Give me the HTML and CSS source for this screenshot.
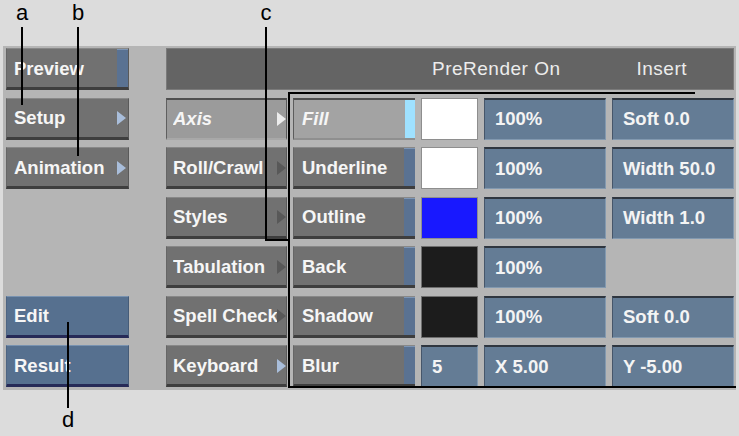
FILE: index.html
```html
<!DOCTYPE html>
<html lang="en">
<head>
    <meta charset="UTF-8">
    <meta name="viewport" content="width=device-width, initial-scale=1.0">
    <title>Text Setup Menu</title>
    <link rel="stylesheet" href="styles.css">
</head>
<body>
    <div class="figure">
        <div class="panel">
            <!-- row 1 -->
            <div class="btn left-btn"><span class="label">Preview</span><span class="ind"></span></div>
            <div class="header">
                <span>PreRender On</span>
                <span>Insert</span>
            </div>

            <!-- row 2 -->
            <div class="btn left-btn"><span class="label">Setup</span><span class="arrow"></span></div>
            <div class="btn mid-btn selected"><span class="label">Axis</span><span class="arrow light"></span></div>
            <div class="btn tbl-btn active"><span class="label">Fill</span><span class="ind cyan"></span></div>
            <div class="swatch white"></div>
            <div class="field">100%</div>
            <div class="field">Soft 0.0</div>

            <!-- row 3 -->
            <div class="btn left-btn"><span class="label">Animation</span><span class="arrow"></span></div>
            <div class="btn mid-btn"><span class="label">Roll/Crawl</span><span class="arrow dark"></span></div>
            <div class="btn tbl-btn"><span class="label">Underline</span><span class="ind"></span></div>
            <div class="swatch white"></div>
            <div class="field">100%</div>
            <div class="field">Width 50.0</div>

            <!-- row 4 -->
            <div class="empty"></div>
            <div class="btn mid-btn"><span class="label">Styles</span><span class="arrow dark"></span></div>
            <div class="btn tbl-btn"><span class="label">Outline</span><span class="ind"></span></div>
            <div class="swatch blue"></div>
            <div class="field">100%</div>
            <div class="field">Width 1.0</div>

            <!-- row 5 -->
            <div class="empty"></div>
            <div class="btn mid-btn"><span class="label">Tabulation</span><span class="arrow dark"></span></div>
            <div class="btn tbl-btn"><span class="label">Back</span><span class="ind"></span></div>
            <div class="swatch black"></div>
            <div class="field">100%</div>
            <div class="empty"></div>

            <!-- row 6 -->
            <div class="btn left-btn blue-btn"><span class="label">Edit</span></div>
            <div class="btn mid-btn"><span class="label">Spell Check</span><span class="arrow dark"></span></div>
            <div class="btn tbl-btn"><span class="label">Shadow</span><span class="ind"></span></div>
            <div class="swatch black"></div>
            <div class="field">100%</div>
            <div class="field">Soft 0.0</div>

            <!-- row 7 -->
            <div class="btn left-btn blue-btn"><span class="label">Result</span></div>
            <div class="btn mid-btn"><span class="label">Keyboard</span><span class="arrow"></span></div>
            <div class="btn tbl-btn"><span class="label">Blur</span><span class="ind"></span></div>
            <div class="field">5</div>
            <div class="field">X 5.00</div>
            <div class="field">Y -5.00</div>
        </div>

        <!-- callouts -->
        <span class="callout-letter letter-a">a</span>
        <span class="callout-letter letter-b">b</span>
        <span class="callout-letter letter-c">c</span>
        <span class="callout-letter letter-d">d</span>
        <div class="line line-a"></div>
        <div class="line line-b"></div>
        <div class="line line-c"></div>
        <div class="line line-c-foot"></div>
        <div class="line bracket-side"></div>
        <div class="line bracket-top"></div>
        <div class="line bracket-bottom"></div>
        <div class="line line-d"></div>
    </div>
</body>
</html>
```

FILE: styles.css
```css
body {
    margin: 0;
    padding: 0;
    background-color: #dcdcdc;
    font-family: "Liberation Sans", Arial, sans-serif;
}
.figure {
    position: relative;
    width: 739px;
    height: 436px;
    padding: 46px 0 0 3px;
    box-sizing: border-box;
}
.panel {
    width: 733px;
    box-sizing: border-box;
    background-color: #b5b5b5;
    padding: 2px 2px 3px 3px;
    display: grid;
    grid-template-columns: 154px 121px 122px 57px 122px 122px;
    grid-template-rows: 42px repeat(6, 42px);
    column-gap: 6px;
    row-gap: 7.5px;
}
.header {
    grid-column: 2 / 7;
    background-color: #646464;
    border: 1px solid #7a7a7a;
    color: #ececec;
    font-size: 19px;
    letter-spacing: 0.5px;
    display: flex;
    align-items: center;
    padding-left: 265px;
    gap: 76px;
}

/* buttons */
.btn {
    display: flex;
    align-items: center;
    box-sizing: border-box;
    background-color: #717171;
    border-top: 1px solid #888;
    border-left: 1px solid #666;
    border-right: 1px solid #5a5a5a;
    border-bottom: 3px solid #3e3e3e;
    color: #f6f6f6;
    font-size: 18.5px;
    font-weight: bold;
    padding-left: 7px;
    padding-top: 1px;
    overflow: hidden;
}
.btn .label {
    flex: 1;
    min-width: 0;
    overflow: hidden;
    white-space: nowrap;
}
.left-btn {
    width: 123px;
}
.mid-btn {
    padding-left: 6px;
}
.mid-btn .arrow {
    margin-right: 0;
}
.btn .ind {
    width: 11px;
    align-self: stretch;
    background-color: #5a7292;
    border-top: 1px solid #7d95b4;
    margin-top: -1px;
    margin-bottom: -3px;
    border-bottom: 3px solid #2b2f5c;
}
.btn .ind.cyan {
    background-color: #9fe1ff;
    border-top: none;
    border-bottom: 2px solid #9fe1ff;
    margin-bottom: -2px;
    width: 10px;
}
.arrow {
    width: 0;
    height: 0;
    border-top: 7px solid transparent;
    border-bottom: 7px solid transparent;
    border-left: 9px solid #a9bedb;
    margin-right: 2px;
}
.arrow.dark {
    border-left-color: #585858;
}
.arrow.light {
    border-left-color: #ececec;
}
.selected {
    background-color: #9b9b9b;
    border-top: 2px solid #4f4f4f;
    border-left: 1px solid #5f5f5f;
    border-bottom: 2px solid #a8a8a8;
    font-style: italic;
}
.tbl-btn {
    padding-left: 8px;
    border-right: none;
}
.active {
    background-color: #a3a3a3;
    border-top: 2px solid #4e4e4e;
    border-left: 1px solid #5c5c5c;
    border-bottom: 2px solid #8f8f8f;
    font-style: italic;
}
.blue-btn {
    background-color: #56708f;
    border-top: 1px solid #7892b0;
    border-left-color: #4d6482;
    border-right-color: #465c78;
    border-bottom: 3px solid #262a57;
}

/* value fields and swatches */
.field {
    display: flex;
    align-items: center;
    box-sizing: border-box;
    background-color: #647c95;
    border-top: 2px solid #2f363f;
    border-left: 1px solid #46566a;
    border-right: 1px solid #8299b0;
    border-bottom: 1px solid #8299b0;
    color: #f4f4f4;
    font-size: 18.5px;
    font-weight: bold;
    padding-left: 10px;
}
.swatch {
    box-sizing: border-box;
    border: 1px solid #8e8e8e;
}
.swatch.white {
    background-color: #ffffff;
}
.swatch.blue {
    background-color: #1818ff;
}
.swatch.black {
    background-color: #1c1c1c;
    border-color: #6e6e6e;
}

/* callouts drawn over the screenshot */
.callout-letter {
    position: absolute;
    font-size: 22px;
    line-height: 22px;
    color: #000;
    transform: translateX(-50%);
}
.letter-a { left: 22px; top: 2px; }
.letter-b { left: 78px; top: 2px; }
.letter-c { left: 266px; top: 2px; }
.letter-d { left: 68px; top: 409px; }
.line {
    position: absolute;
    background-color: #000;
}
.line-a { left: 21px; top: 27px; width: 2px; height: 78px; }
.line-b { left: 77px; top: 27px; width: 2px; height: 129px; }
.line-c { left: 265px; top: 27px; width: 2px; height: 214px; }
.line-c-foot { left: 265px; top: 239px; width: 24px; height: 2px; }
.bracket-side { left: 288px; top: 92px; width: 2px; height: 296px; }
.bracket-top { left: 288px; top: 92px; width: 407px; height: 2px; }
.bracket-bottom { left: 288px; top: 386px; width: 448px; height: 2px; }
.line-d { left: 67px; top: 322px; width: 2px; height: 86px; }
```
